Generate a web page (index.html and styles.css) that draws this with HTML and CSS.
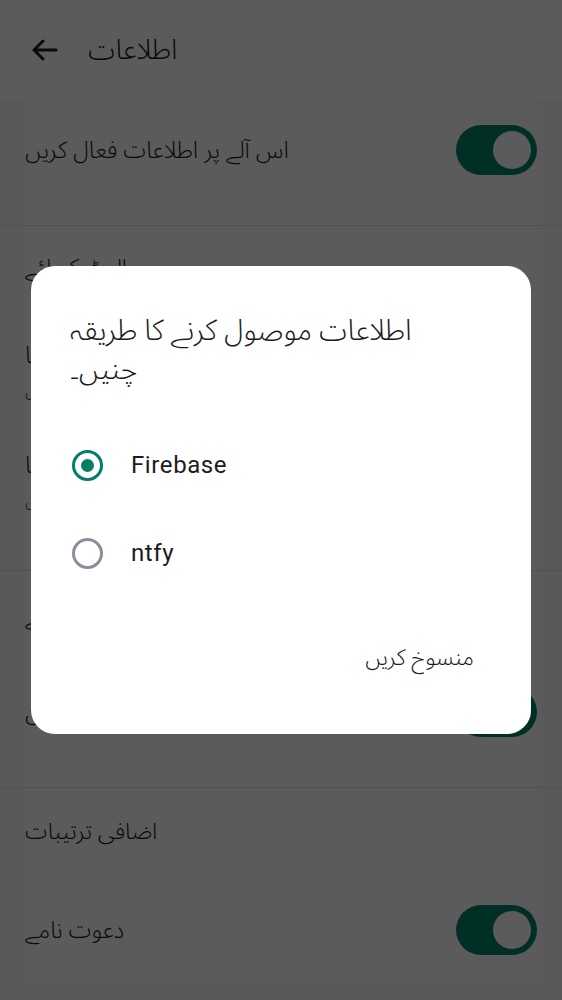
FILE: index.html
```html
<!DOCTYPE html>
<html lang="ur">
<head>
<meta charset="utf-8">
<title>اطلاعات</title>
<link rel="stylesheet" href="styles.css">
</head>
<body>
<div class="page">
  <header class="topbar">
    <svg class="back" width="28" height="24" viewBox="0 0 28 24" aria-hidden="true">
      <path d="M26 12H4M13 3L4 12l9 9" fill="none" stroke="#1c1b1f" stroke-width="3" stroke-linecap="round" stroke-linejoin="round"/>
    </svg>
    <h1 class="title">اطلاعات</h1>
  </header>

  <section class="group g1">
    <div class="row row-first">
      <span class="label">اس آلے پر اطلاعات فعال کریں</span>
      <span class="switch"><span class="thumb"></span></span>
    </div>
  </section>
  <div class="divider"></div>

  <section class="group g2">
    <div class="head head-g2">الرٹ کے لئے</div>
    <div class="item">
      <span class="label">گروپ چیٹ کی اطلاعات دکھا</span>
      <span class="sub">گروپ میں نئے پیغامات کی اطلاع حاصل</span>
    </div>
    <div class="item">
      <span class="label">براہ راست پیغامات کی اطلاعات دکھا</span>
      <span class="sub">نجی پیغامات کی اطلاع حاصل</span>
    </div>
  </section>
  <div class="divider"></div>

  <section class="group g3">
    <div class="head head-g3">کالز کے لئے</div>
    <div class="row row-g3">
      <span class="label">آنے والی کالز کی اطلاع دیں</span>
      <span class="switch"><span class="thumb"></span></span>
    </div>
  </section>
  <div class="divider"></div>

  <section class="group g4">
    <div class="head head-g4">اضافی ترتیبات</div>
    <div class="row row-g4">
      <span class="label">دعوت نامے</span>
      <span class="switch"><span class="thumb"></span></span>
    </div>
  </section>
</div>

<div class="scrim">
  <div class="dialog" role="dialog">
    <h2 class="dlg-title">اطلاعات موصول کرنے کا طریقہ<br>چنیں۔</h2>
    <div class="options">
      <div class="option">
        <span class="radio checked"><span class="dot"></span></span>
        <span class="opt-label">Firebase</span>
      </div>
      <div class="option">
        <span class="radio"></span>
        <span class="opt-label">ntfy</span>
      </div>
    </div>
    <div class="actions">
      <span class="btn">منسوخ کریں</span>
    </div>
  </div>
</div>
</body>
</html>
```

FILE: styles.css
```css
* { box-sizing: border-box; }

html, body {
  margin: 0;
  padding: 0;
}

body {
  background: #f9f9f9;
  font-family: Roboto, "Noto Sans Arabic", "Noto Sans", "DejaVu Sans", sans-serif;
  font-weight: 300;
  color: #1c1b1f;
  width: 562px;
  height: 1000px;
  overflow: hidden;
}

.page {
  display: flex;
  flex-direction: column;
}

.topbar {
  height: 100px;
  display: flex;
  align-items: center;
  padding-left: 30px;
  gap: 30px;
  background: #ffffff;
}

.back { display: block; }

.title {
  margin: 0;
  font-size: 28px;
  font-weight: 300;
  line-height: 34px;
}

.group {
  display: flex;
  flex-direction: column;
  background: #ffffff;
  margin: 0 25px;
}

.g1 { padding-bottom: 25px; }
.g2 { padding-bottom: 40px; }
.g3 { padding-bottom: 26px; }

.divider {
  height: 1px;
  background: #e3e3e3;
}

.row {
  display: flex;
  align-items: center;
  justify-content: space-between;
}

.row-first { height: 100px; }
.row-g3 { height: 98px; }
.row-g4 { height: 108px; }

.label {
  font-size: 23.5px;
  line-height: 30px;
}

.head {
  display: flex;
  align-items: center;
  font-size: 23px;
  line-height: 30px;
}

.head-g2 { height: 84px; }
.head-g3 { height: 92px; }
.head-g4 { height: 88px; }

.item {
  height: 110px;
  padding-top: 30px;
  display: flex;
  flex-direction: column;
  gap: 8px;
}

.sub {
  font-size: 17px;
  line-height: 24px;
  color: #49454f;
}

.switch {
  width: 81px;
  height: 50px;
  border-radius: 25px;
  background: #00846c;
  display: flex;
  align-items: center;
  justify-content: flex-end;
  padding-right: 6px;
}

.thumb {
  width: 38px;
  height: 38px;
  border-radius: 50%;
  background: #ffffff;
}

.scrim {
  position: fixed;
  inset: 0;
  background: rgba(0, 0, 0, 0.643);
  display: flex;
  align-items: center;
  justify-content: center;
}

.dialog {
  width: 500px;
  height: 468px;
  background: #ffffff;
  border-radius: 24px;
  padding: 45px 40px 0 39px;
  display: flex;
  flex-direction: column;
}

.dlg-title {
  margin: 0;
  font-size: 29px;
  font-weight: 300;
  line-height: 39px;
  color: #1c1b1f;
}

.options {
  margin-top: 32px;
  display: flex;
  flex-direction: column;
}

.option {
  height: 88px;
  display: flex;
  align-items: center;
  gap: 28px;
}

.radio {
  width: 31px;
  height: 31px;
  border-radius: 50%;
  border: 3px solid #8a9099;
  display: flex;
  align-items: center;
  justify-content: center;
  margin-left: 2px;
}

.radio.checked { border-color: #057e66; }

.dot {
  width: 13px;
  height: 13px;
  border-radius: 50%;
  background: #057e66;
}

.opt-label {
  font-family: Roboto, "Noto Sans", sans-serif;
  font-weight: 400;
  font-size: 24px;
  color: #1d1b20;
  letter-spacing: 0.6px;
}

.actions {
  margin-top: 36px;
  height: 48px;
  display: flex;
  align-items: center;
  justify-content: flex-end;
  padding-right: 17px;
}

.btn {
  font-size: 22.5px;
  line-height: 30px;
  color: #1c1b1f;
}
```
